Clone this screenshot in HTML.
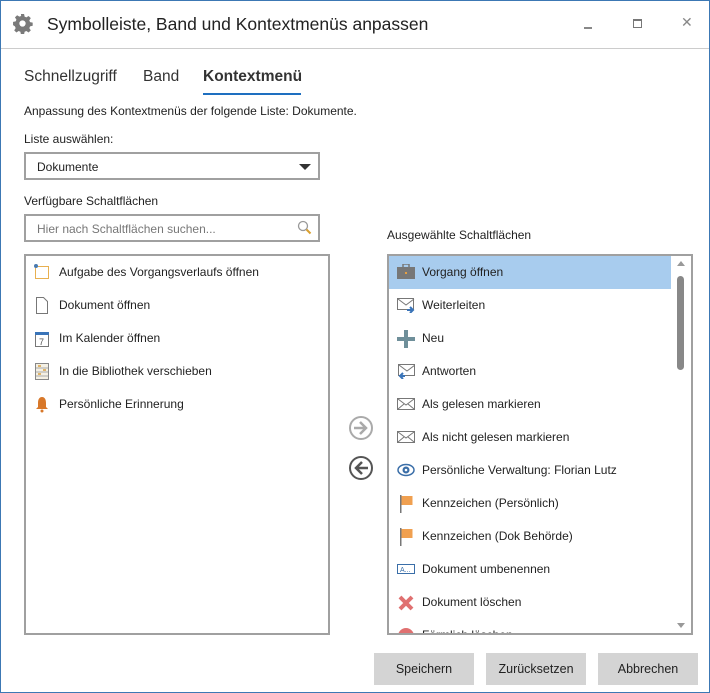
<!DOCTYPE html>
<html><head><meta charset="utf-8"><style>
*{box-sizing:border-box;margin:0;padding:0}
body{width:710px;height:693px;background:#fff;font-family:"Liberation Sans",sans-serif;color:#222;position:relative;overflow:hidden}
.win{position:absolute;left:0;top:0;width:710px;height:693px;border:1px solid #3c78b4}
.abs{position:absolute}
.t12{font-size:12px}
.box{position:absolute;border:2px solid #a0a0a0;background:#fff}
.row{position:absolute;left:0;height:33px;width:100%;font-size:12px;line-height:33px;padding-left:33px}
.row svg{position:absolute;left:8px;top:8px}
.btn{position:absolute;top:653px;width:100px;height:32px;background:#d4d4d4;font-size:12.5px;text-align:center;line-height:32px;color:#222}
</style></head><body><div class="win"></div>
<svg class="abs" style="left:12px;top:13px" width="21" height="21" viewBox="0 0 20 20"><path fill="#7a7a7a" d="M8.5 1h3l.5 2.5 1.7.7 2.1-1.4 2.1 2.1-1.4 2.1.7 1.7 2.5.5v3l-2.5.5-.7 1.7 1.4 2.1-2.1 2.1-2.1-1.4-1.7.7-.5 2.5h-3l-.5-2.5-1.7-.7-2.1 1.4-2.1-2.1 1.4-2.1-.7-1.7L1 11.5v-3l2.5-.5.7-1.7-1.4-2.1 2.1-2.1 2.1 1.4 1.7-.7z"/><circle cx="10" cy="10" r="3" fill="#fff"/></svg>
<div class="abs" style="left:47px;top:14px;font-size:17.5px;color:#222">Symbolleiste, Band und Kontextmenüs anpassen</div>
<div class="abs" style="left:584px;top:27px;width:8px;height:2px;background:#888"></div>
<div class="abs" style="left:633px;top:19px;width:9px;height:9px;border:1px solid #777;border-top-width:2px"></div>
<div class="abs" style="left:681px;top:14px;font-size:14px;color:#888">✕</div>
<div class="abs" style="left:1px;top:48px;width:708px;height:1px;background:#ccc"></div>
<div class="abs" style="left:24px;top:68px;font-size:15.5px;color:#333">Schnellzugriff</div>
<div class="abs" style="left:143px;top:68px;font-size:15.5px;color:#333">Band</div>
<div class="abs" style="left:203px;top:68px;font-size:15.5px;font-weight:bold;color:#333">Kontextmenü</div>
<div class="abs" style="left:203px;top:93px;width:98px;height:2px;background:#1e6fc0"></div>
<div class="abs t12" style="left:24px;top:104px">Anpassung des Kontextmenüs der folgende Liste: Dokumente.</div>
<div class="abs t12" style="left:24px;top:132px">Liste auswählen:</div>
<div class="box" style="left:24px;top:152px;width:296px;height:28px"><span class="abs t12" style="left:11px;top:6px">Dokumente</span><div class="abs" style="right:7px;top:10px;border-left:6px solid transparent;border-right:6px solid transparent;border-top:6px solid #333"></div></div>
<div class="abs t12" style="left:24px;top:194px">Verfügbare Schaltflächen</div>
<div class="box" style="left:24px;top:214px;width:296px;height:28px"><span class="abs t12" style="left:11px;top:6px;color:#777">Hier nach Schaltflächen suchen...</span><svg class="abs" style="right:5px;top:4px" width="16" height="16"><circle cx="6" cy="6" r="4.5" fill="none" stroke="#999" stroke-width="1.3"/><path d="M9.5 9.5l4 4" stroke="#d9a030" stroke-width="2"/></svg></div>
<div class="box" style="left:24px;top:254px;width:306px;height:381px">
<div class="row" style="top:0">Aufgabe des Vorgangsverlaufs öffnen<svg width="16" height="16"><rect x="1.5" y="2.5" width="13" height="12" fill="#fff" stroke="#e8b050"/><circle cx="2" cy="2" r="2" fill="#4a7ab0"/></svg></div>
<div class="row" style="top:33px">Dokument öffnen<svg width="16" height="17"><path d="M2.5 .5h7l4 4v12h-11z" fill="#fff" stroke="#777"/></svg></div>
<div class="row" style="top:66px">Im Kalender öffnen<svg width="16" height="17"><rect x="1.5" y="2.5" width="13" height="14" fill="#fff" stroke="#777"/><rect x="1" y="2" width="14" height="3" fill="#3a74b8"/><text x="5" y="15" font-size="9" fill="#555" font-family="Liberation Sans">7</text></svg></div>
<div class="row" style="top:99px">In die Bibliothek verschieben<svg width="16" height="17"><rect x="1.5" y=".5" width="13" height="16" fill="#f4f0e4" stroke="#888"/><path d="M2 5h12M2 9h12M2 13h12" stroke="#aaa"/><path d="M4 3h3M9 7h3M4 11h3" stroke="#d9a040" stroke-width="1.5"/></svg></div>
<div class="row" style="top:132px">Persönliche Erinnerung<svg width="16" height="17"><path d="M8 1c3 0 4 3 4 6v4l2 2H2l2-2V7c0-3 1-6 4-6z" fill="#d8782a"/><circle cx="8" cy="15" r="1.5" fill="#d8782a"/></svg></div>
</div>
<svg class="abs" style="left:348px;top:415px" width="26" height="26"><circle cx="13" cy="13" r="11" fill="none" stroke="#aaa" stroke-width="2"/><path d="M6 13h11M12 7l6 6-6 6" fill="none" stroke="#aaa" stroke-width="2.5"/></svg>
<svg class="abs" style="left:348px;top:455px" width="26" height="26"><circle cx="13" cy="13" r="11" fill="none" stroke="#555" stroke-width="2"/><path d="M20 13H9M14 7l-6 6 6 6" fill="none" stroke="#555" stroke-width="2.5"/></svg>
<div class="abs t12" style="left:387px;top:228px">Ausgewählte Schaltflächen</div>
<div class="box" style="left:387px;top:254px;width:306px;height:381px;overflow:hidden">
<div class="abs" style="left:0;top:0;width:284px;height:33px;background:#a8ccee"></div>
<div class="row" style="top:0">Vorgang öffnen<svg width="18" height="16"><rect x="0" y="3" width="18" height="12" fill="#777"/><rect x="6" y="0" width="6" height="4" fill="none" stroke="#777" stroke-width="1.5"/><rect x="8" y="8" width="2" height="2" fill="#e8a040"/></svg></div>
<div class="row" style="top:33px">Weiterleiten<svg width="18" height="16"><rect x=".5" y="1.5" width="16" height="11" fill="#fff" stroke="#777"/><path d="M1 2l8 6 8-6" fill="none" stroke="#777"/><path d="M10 13h5M13 10l3 3-3 3" stroke="#3a74b8" stroke-width="2" fill="none"/></svg></div>
<div class="row" style="top:66px">Neu<svg width="18" height="18"><path d="M7 0h4v7h7v4h-7v7H7v-7H0V7h7z" fill="#6f8f9a"/></svg></div>
<div class="row" style="top:99px">Antworten<svg width="18" height="16"><rect x="1.5" y="1.5" width="16" height="11" fill="#fff" stroke="#777"/><path d="M2 2l8 6 8-6" fill="none" stroke="#777"/><path d="M8 13H3M6 10l-3 3 3 3" stroke="#3a74b8" stroke-width="2" fill="none"/></svg></div>
<div class="row" style="top:132px">Als gelesen markieren<svg width="18" height="16"><rect x=".5" y="2.5" width="17" height="11" fill="#fff" stroke="#777"/><path d="M1 3l8 6 8-6M1 13l6-5M17 13l-6-5" fill="none" stroke="#777"/></svg></div>
<div class="row" style="top:165px">Als nicht gelesen markieren<svg width="18" height="16"><rect x=".5" y="2.5" width="17" height="11" fill="#fff" stroke="#777"/><path d="M1 3l8 6 8-6M1 13l6-5M17 13l-6-5" fill="none" stroke="#777"/></svg></div>
<div class="row" style="top:198px">Persönliche Verwaltung: Florian Lutz<svg width="18" height="16"><ellipse cx="9" cy="8" rx="8" ry="5.5" fill="#fff" stroke="#3a6ea8" stroke-width="1.5"/><circle cx="9" cy="8" r="3.5" fill="#3a6ea8"/><circle cx="9" cy="8" r="1.3" fill="#fff"/></svg></div>
<div class="row" style="top:231px">Kennzeichen (Persönlich)<svg width="18" height="18"><rect x="3" y="0" width="1.5" height="18" fill="#777"/><rect x="4.5" y="1" width="11" height="9" fill="#f0a050"/></svg></div>
<div class="row" style="top:264px">Kennzeichen (Dok Behörde)<svg width="18" height="18"><rect x="3" y="0" width="1.5" height="18" fill="#777"/><rect x="4.5" y="1" width="11" height="9" fill="#f0a050"/></svg></div>
<div class="row" style="top:297px">Dokument umbenennen<svg width="18" height="16"><rect x=".5" y="3.5" width="17" height="9" fill="#fff" stroke="#3a6ea8"/><text x="3" y="11" font-size="7" fill="#3a6ea8" font-family="Liberation Sans">A...</text></svg></div>
<div class="row" style="top:330px">Dokument löschen<svg width="18" height="18"><path d="M3 3l12 12M15 3L3 15" stroke="#e07070" stroke-width="4"/></svg></div>
<div class="row" style="top:363px">Förmlich löschen<svg width="18" height="18"><circle cx="9" cy="9" r="8" fill="#e07070"/></svg></div>
<div class="abs" style="right:0;top:0;width:20px;height:377px;background:#fff"></div>
<div class="abs" style="right:6px;top:5px;border-left:4px solid transparent;border-right:4px solid transparent;border-bottom:5px solid #999"></div>
<div class="abs" style="right:7px;top:20px;width:7px;height:94px;border-radius:4px;background:#888"></div>
<div class="abs" style="right:6px;top:367px;border-left:4px solid transparent;border-right:4px solid transparent;border-top:5px solid #999"></div>
</div>
<div class="btn" style="left:374px">Speichern</div>
<div class="btn" style="left:486px">Zurücksetzen</div>
<div class="btn" style="left:598px">Abbrechen</div>
</body></html>
